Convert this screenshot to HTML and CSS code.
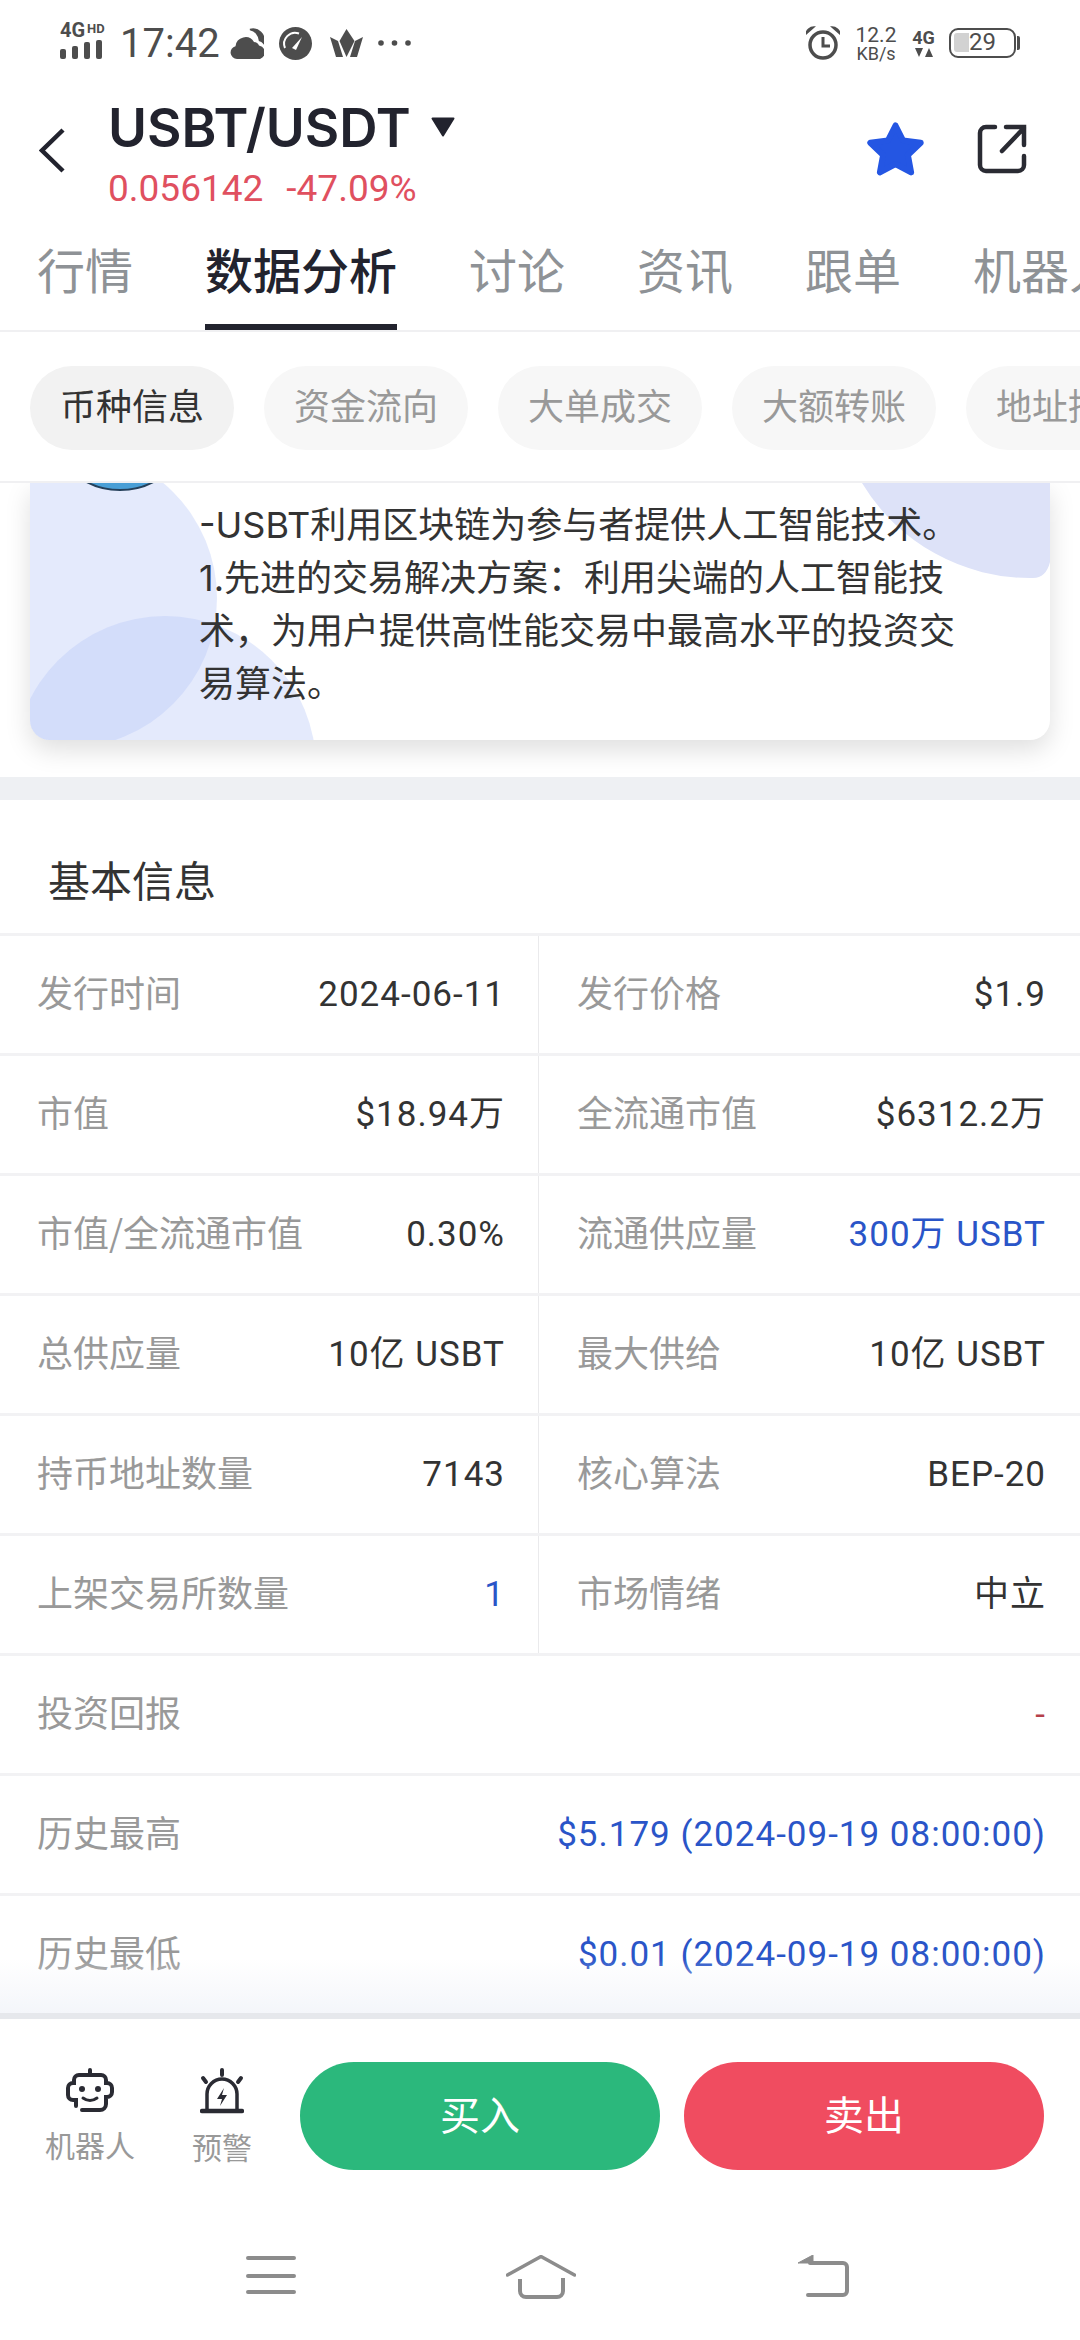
FILE: index.html
```html
<!DOCTYPE html>
<html lang="zh-CN">
<head>
    <meta charset="UTF-8">
    <meta name="viewport" content="width=device-width, initial-scale=1.0">
    <title>USBT/USDT</title>
    <link rel="stylesheet" href="styles.css">
</head>
<body>
<div class="screen">
    <div class="status">
        <div class="signal">
            <div class="signal-text"><span class="net">4G</span><span class="hd">HD</span></div>
            <div class="bars"><i class="b1"></i><i class="b2"></i><i class="b3"></i><i class="b4"></i></div>
        </div>
        <span class="clock">17:42</span>
        <svg class="st-icon" width="34" height="31" viewBox="0 0 34 31"><path d="M7 31a6.5 6.5 0 0 1-1.5-12.8A10 10 0 0 1 24 14a6 6 0 0 1 5 3.5 7 7 0 0 1 1 13.5z" fill="#4d4d4d"/><path d="M20 1.5a11 11 0 0 1 13.5 13.5 7 7 0 0 0-4-2.5A12 12 0 0 0 20 1.5z" fill="#4d4d4d" stroke="#4d4d4d" stroke-width="1.5"/></svg>
        <svg class="st-icon" width="33" height="33" viewBox="0 0 33 33"><circle cx="16.5" cy="16.5" r="16.5" fill="#4d4d4d"/><path d="M6 21a11 11 0 0 1 14-14.5" fill="none" stroke="#fff" stroke-width="2"/><path d="M13 21l10-11-6 13z" fill="#fff"/></svg>
        <svg class="st-icon st-crown" width="33" height="28" viewBox="0 0 33 28"><path d="M16.5 0l8 12-8 16-7-16z" fill="#4d4d4d"/><path d="M0 8l8 4 5 16H6zM33 8l-8 4-5 16h7z" fill="#4d4d4d"/></svg>
        <svg class="st-icon" width="33" height="6" viewBox="0 0 33 6"><circle cx="3" cy="3" r="2.8" fill="#4d4d4d"/><circle cx="16.5" cy="3" r="2.8" fill="#4d4d4d"/><circle cx="30" cy="3" r="2.8" fill="#4d4d4d"/></svg>
        <div class="status-right">
            <svg width="34" height="34" viewBox="0 0 34 34"><circle cx="17" cy="19" r="13" fill="none" stroke="#4d4d4d" stroke-width="3.5"/><path d="M17 11v9h7" fill="none" stroke="#4d4d4d" stroke-width="3"/><path d="M0 8a8 8 0 0 1 8-7zM34 8a8 8 0 0 0-8-7z" fill="#4d4d4d" stroke="#4d4d4d" stroke-width="1.5"/></svg>
            <div class="speed"><span>12.2</span><span class="speed-unit">KB/s</span></div>
            <div class="net-type"><span>4G</span><svg width="18" height="9" viewBox="0 0 18 9"><path d="M0 0h8L4 9zM10 9h8l-4-9z" fill="#4d4d4d"/></svg></div>
            <div class="battery"><div class="battery-body"><span class="battery-fill"></span><span class="battery-num">29</span></div><span class="battery-nub"></span></div>
        </div>
    </div>

    <div class="topbar">
        <svg class="back" width="26" height="45" viewBox="0 0 26 45"><path d="M24 2L3 22.5 24 43" fill="none" stroke="#22232e" stroke-width="4.5"/></svg>
        <div class="pair">
            <div class="pair-name">USBT/USDT<svg width="24" height="20" viewBox="0 0 24 20"><path d="M1.5 1.5h21L12 18.5z" fill="#22232e" stroke="#22232e" stroke-width="2" stroke-linejoin="round"/></svg></div>
            <div class="pair-price"><span>0.056142</span><span>-47.09%</span></div>
        </div>
        <div class="top-actions">
            <svg width="57" height="54" viewBox="0 0 57 54"><path d="M28.5 3.5L36.1 18.5 53.7 20.8 40.9 33 44.1 50.4 28.5 42 12.9 50.4 16.1 33 3.3 20.8 20.9 18.5z" fill="#2456e3" stroke="#2456e3" stroke-width="6" stroke-linejoin="round"/></svg>
            <svg width="50" height="50" viewBox="0 0 50 50"><path d="M18 3H9a6 6 0 0 0-6 6v32a6 6 0 0 0 6 6h32a6 6 0 0 0 6-6v-9" fill="none" stroke="#2a2b33" stroke-width="4.5" stroke-linecap="round"/><path d="M25 27L47 4M29 3h18v18" fill="none" stroke="#2a2b33" stroke-width="4.5" stroke-linecap="round"/></svg>
        </div>
    </div>

    <div class="tabs">
        <div class="tab">行情</div>
        <div class="tab active">数据分析</div>
        <div class="tab">讨论</div>
        <div class="tab">资讯</div>
        <div class="tab">跟单</div>
        <div class="tab">机器人</div>
    </div>

    <div class="chips">
        <div class="chip active">币种信息</div>
        <div class="chip">资金流向</div>
        <div class="chip">大单成交</div>
        <div class="chip">大额转账</div>
        <div class="chip">地址持仓</div>
    </div>

    <div class="content">
        <div class="intro">
            <svg class="intro-bg" width="1020" height="257" viewBox="0 0 1020 257">
                <circle cx="37" cy="115" r="150" fill="#b6c6f7" fill-opacity="0.37"/>
                <circle cx="135" cy="284" r="151" fill="#b6c6f7" fill-opacity="0.37"/>
                <path d="M832 0A196 196 0 0 0 1003 95Q1016 95 1020 79V0z" fill="#dde2f8"/>
                <circle cx="90" cy="-65" r="72" fill="#4a9fd6" stroke="#25405a" stroke-width="2"/>
            </svg>
            <p>-USBT利用区块链为参与者提供人工智能技术。</p>
            <p>1.先进的交易解决方案：利用尖端的人工智能技术，为用户提供高性能交易中最高水平的投资交易算法。</p>
        </div>
        <div class="band"></div>
        <h2 class="section-title">基本信息</h2>
        <div class="info">
            <div class="row">
                <div class="cell"><span class="label">发行时间</span><span class="value">2024-06-11</span></div>
                <div class="cell"><span class="label">发行价格</span><span class="value">$1.9</span></div>
            </div>
            <div class="row">
                <div class="cell"><span class="label">市值</span><span class="value">$18.94万</span></div>
                <div class="cell"><span class="label">全流通市值</span><span class="value">$6312.2万</span></div>
            </div>
            <div class="row">
                <div class="cell"><span class="label">市值/全流通市值</span><span class="value">0.30%</span></div>
                <div class="cell"><span class="label">流通供应量</span><span class="value link">300万 USBT</span></div>
            </div>
            <div class="row">
                <div class="cell"><span class="label">总供应量</span><span class="value">10亿 USBT</span></div>
                <div class="cell"><span class="label">最大供给</span><span class="value">10亿 USBT</span></div>
            </div>
            <div class="row">
                <div class="cell"><span class="label">持币地址数量</span><span class="value">7143</span></div>
                <div class="cell"><span class="label">核心算法</span><span class="value">BEP-20</span></div>
            </div>
            <div class="row">
                <div class="cell"><span class="label">上架交易所数量</span><span class="value link">1</span></div>
                <div class="cell"><span class="label">市场情绪</span><span class="value">中立</span></div>
            </div>
            <div class="row full">
                <div class="cell"><span class="label">投资回报</span><span class="value down">-</span></div>
            </div>
            <div class="row full">
                <div class="cell"><span class="label">历史最高</span><span class="value link">$5.179 (2024-09-19 08:00:00)</span></div>
            </div>
            <div class="row full">
                <div class="cell"><span class="label">历史最低</span><span class="value link">$0.01 (2024-09-19 08:00:00)</span></div>
            </div>
        </div>
    </div>

    <div class="footer">
        <div class="trade">
            <div class="tool">
                <svg width="48" height="44" viewBox="0 0 48 44"><path d="M24 2v5H35a5 5 0 0 1 5 5v3h1a5 5 0 0 1 5 5v4a5 5 0 0 1-5 5h-1v7a6 6 0 0 1-6 6H16M10 38v-6H7a5 5 0 0 1-5-5v-7a5 5 0 0 1 5-5h1v-3a5 5 0 0 1 5-5h11" fill="none" stroke="#2a2b33" stroke-width="4" stroke-linecap="round"/><circle cx="16" cy="21" r="3" fill="#2a2b33"/><circle cx="32" cy="21" r="3" fill="#2a2b33"/><path d="M17 30q7 5 14 0" fill="none" stroke="#2a2b33" stroke-width="3" stroke-linecap="round"/></svg>
                <span>机器人</span>
            </div>
            <div class="tool">
                <svg width="44" height="46" viewBox="0 0 44 46"><path d="M22 2v5M3 10l3 4M41 10l-3 4" fill="none" stroke="#2a2b33" stroke-width="4" stroke-linecap="round"/><path d="M7 42V26a15 15 0 0 1 30 0v16" fill="none" stroke="#2a2b33" stroke-width="3.5"/><path d="M2 43h40" stroke="#2a2b33" stroke-width="4.5" stroke-linecap="round"/><path d="M24 20l-7 11h5l-2 7 7-11h-5z" fill="#2a2b33"/></svg>
                <span>预警</span>
            </div>
            <button class="btn buy">买入</button>
            <button class="btn sell">卖出</button>
        </div>
        <div class="nav">
            <svg width="50" height="40" viewBox="0 0 50 40"><path d="M2 3h46M2 21h46M2 37h46" stroke="#8c8c8c" stroke-width="4" stroke-linecap="round"/></svg>
            <svg width="70" height="44" viewBox="0 0 70 44"><path d="M1.5 20L35 1.5 68.5 20" fill="none" stroke="#8c8c8c" stroke-width="3.5" stroke-linecap="round"/><path d="M14 24v12a6 6 0 0 0 6 6h31a6 6 0 0 0 6-6v-13" fill="none" stroke="#8c8c8c" stroke-width="4"/></svg>
            <svg class="nav-back" width="51" height="42" viewBox="0 0 51 42"><path d="M0 8L15 0v8z" fill="#8c8c8c" stroke="#8c8c8c" stroke-width="1" stroke-linejoin="round"/><path d="M12 8h33a4 4 0 0 1 4 4v24a4 4 0 0 1-4 4H10" fill="none" stroke="#8c8c8c" stroke-width="4" stroke-linecap="round"/></svg>
        </div>
    </div>
</div>
</body>
</html>
```

FILE: styles.css
```css
* {
    box-sizing: border-box;
}
body {
    margin: 0;
    background: #fff;
    font-family: Inter, "Noto Sans CJK SC", sans-serif;
    color: #333;
}
.screen {
    width: 1080px;
    height: 2340px;
    display: flex;
    flex-direction: column;
    overflow: hidden;
    background: #fff;
}

/* status bar */
.status {
    height: 78px;
    flex-shrink: 0;
    padding: 8px 60px 0;
    display: flex;
    align-items: center;
    color: #4d4d4d;
}
.signal {
    width: 46px;
    margin-right: 14px;
    margin-top: -4px;
}
.signal-text {
    display: flex;
    font-family: Roboto, sans-serif;
    font-weight: 700;
    line-height: 15px;
    height: 15px;
}
.net {
    font-size: 20px;
}
.hd {
    font-size: 13px;
    line-height: 11px;
    margin-left: 2px;
}
.bars {
    display: flex;
    align-items: flex-end;
    gap: 6px;
    height: 20px;
    margin-top: 1px;
}
.bars i {
    width: 6px;
    background: #4d4d4d;
    border-radius: 2px;
}
.b1 { height: 10px; }
.b2 { height: 13px; }
.b3 { height: 17px; }
.b4 { height: 19px; }
.clock {
    font-family: Roboto, sans-serif;
    font-size: 40px;
    margin-right: 14px;
    width: 96px;
}
.st-icon {
    margin-right: 15px;
    flex-shrink: 0;
}
.st-crown {
    margin-left: 3px;
}
.status-right {
    margin-left: auto;
    display: flex;
    align-items: center;
}
.speed {
    width: 44px;
    margin: 0 14px;
    display: flex;
    flex-direction: column;
    align-items: center;
    gap: 2px;
    font-family: Roboto, sans-serif;
    font-size: 21px;
    line-height: 18px;
}
.speed-unit {
    font-size: 18px;
    line-height: 15px;
}
.net-type {
    width: 23px;
    margin-right: 14px;
    display: flex;
    flex-direction: column;
    align-items: center;
    font-family: Roboto, sans-serif;
    font-weight: 700;
    font-size: 18px;
    line-height: 18px;
}
.net-type svg {
    margin-top: 1px;
}
.battery {
    display: flex;
    align-items: center;
}
.battery-body {
    position: relative;
    width: 67px;
    height: 30px;
    border: 2.5px solid #4d4d4d;
    border-radius: 9px;
    font-family: Roboto, sans-serif;
    font-size: 24px;
    line-height: 25px;
    text-align: center;
}
.battery-fill {
    position: absolute;
    left: 3px;
    top: 3px;
    width: 15px;
    height: 19px;
    background: #d2d2d2;
    border-radius: 3px 0 0 3px;
}
.battery-num {
    position: relative;
}
.battery-nub {
    width: 3px;
    height: 14px;
    background: #4d4d4d;
    border-radius: 0 2px 2px 0;
    margin-left: 1px;
}

/* header */
.topbar {
    height: 150px;
    flex-shrink: 0;
    display: flex;
    align-items: center;
}
.back {
    margin: 0 43px 6px 39px;
    flex-shrink: 0;
}
.pair-name {
    display: flex;
    align-items: flex-start;
    font-weight: 600;
    font-size: 53px;
    line-height: 60px;
    color: #22232e;
}
.pair-name svg {
    margin: 19px 0 0 20px;
}
.pair-price {
    margin-top: 11px;
    display: flex;
    gap: 23px;
    font-family: Roboto, sans-serif;
    font-size: 37px;
    line-height: 40px;
    color: #e0505f;
}
.top-actions {
    margin: 0 53px 8px auto;
    display: flex;
    align-items: center;
    gap: 53px;
}

/* tabs */
.tabs {
    height: 104px;
    flex-shrink: 0;
    display: flex;
    gap: 72px;
    padding-left: 37px;
    border-bottom: 2px solid #f0f0f2;
}
.tab {
    flex-shrink: 0;
    padding-top: 12px;
    font-family: "Noto Sans CJK SC", sans-serif;
    font-size: 48px;
    line-height: 56px;
    color: #8e9296;
    white-space: nowrap;
}
.tab.active {
    color: #22232e;
    font-weight: 500;
    border-bottom: 6px solid #22232e;
}

/* chips */
.chips {
    height: 149px;
    flex-shrink: 0;
    padding: 34px 0 0 30px;
    display: flex;
    gap: 30px;
}
.chip {
    flex-shrink: 0;
    height: 84px;
    padding: 0 30px;
    border-radius: 42px;
    background: #f7f7f7;
    font-family: "Noto Sans CJK SC", sans-serif;
    font-size: 36px;
    line-height: 77px;
    color: #999;
    white-space: nowrap;
}
.chip.active {
    background: #f2f2f2;
    color: #333;
}

/* scrolling area */
.content {
    flex: 1;
    min-height: 0;
    overflow: hidden;
    border-top: 2px solid #f0f0f2;
}
.intro {
    position: relative;
    margin: 0 30px;
    height: 257px;
    padding: 16px 0 0 169px;
    background: #fff;
    border-radius: 0 0 20px 20px;
    box-shadow: 0 10px 26px rgba(0, 0, 0, 0.13);
    font-size: 36px;
    line-height: 53px;
    color: #333;
}
.intro-bg {
    position: absolute;
    left: 0;
    top: 0;
    border-radius: 0 0 20px 20px;
}
.intro p {
    position: relative;
    margin: 0;
    width: 770px;
}
.band {
    height: 23px;
    margin-top: 37px;
    background: #eef0f3;
}
.section-title {
    margin: 0;
    height: 133px;
    padding: 52px 0 0 48px;
    font-family: "Noto Sans CJK SC", sans-serif;
    font-size: 42px;
    font-weight: 400;
    line-height: 54px;
    color: #333;
}

/* info table */
.info {
    position: relative;
}
.info::after {
    content: "";
    position: absolute;
    left: 0;
    right: 0;
    bottom: 0;
    height: 54px;
    background: linear-gradient(to bottom, rgba(244, 246, 250, 0), #f4f6fa);
}
.row {
    height: 120px;
    display: grid;
    grid-template-columns: 539px 541px;
    border-top: 3px solid #f2f2f4;
}
.row.full {
    grid-template-columns: 1fr;
}
.cell {
    display: flex;
    justify-content: space-between;
    align-items: center;
    padding: 0 34px 0 38px;
}
.row:not(.full) .cell:first-child {
    border-right: 1px solid #eaeaec;
    padding: 0 33px 0 37px;
}
.row.full .cell {
    padding-left: 37px;
}
.label {
    margin-bottom: 8px;
    font-family: "Noto Sans CJK SC", sans-serif;
    font-size: 36px;
    color: #999;
}
.value {
    font-family: Roboto, "Noto Sans CJK SC", sans-serif;
    font-size: 35px;
    line-height: 40px;
    letter-spacing: 1px;
    color: #333;
}
.value.link {
    color: #2a55c8;
}
.value.down {
    color: #b5404a;
}

/* bottom bar */
.footer {
    height: 327px;
    flex-shrink: 0;
    border-top: 6px solid #e6e8ec;
}
.trade {
    height: 151px;
    padding: 43px 0 0 45px;
    display: flex;
}
.tool {
    display: flex;
    flex-direction: column;
    align-items: center;
    margin-right: 57px;
    padding-top: 6px;
    font-family: "Noto Sans CJK SC", sans-serif;
    font-size: 30px;
    line-height: 36px;
    color: #999;
}
.tool span {
    margin-top: 14px;
}
.tool + .tool {
    margin-right: 48px;
}
.btn {
    width: 360px;
    height: 108px;
    padding: 0 0 6px;
    border: none;
    border-radius: 54px;
    font-family: "Noto Sans CJK SC", sans-serif;
    font-size: 40px;
    color: #fff;
}
.buy {
    background: #2bb87c;
    margin-right: 24px;
}
.sell {
    background: #f04c60;
}
.nav {
    padding: 85px 0 0 246px;
    display: flex;
    align-items: flex-start;
    gap: 210px;
}
.nav-back {
    margin-left: 12px;
}
```
